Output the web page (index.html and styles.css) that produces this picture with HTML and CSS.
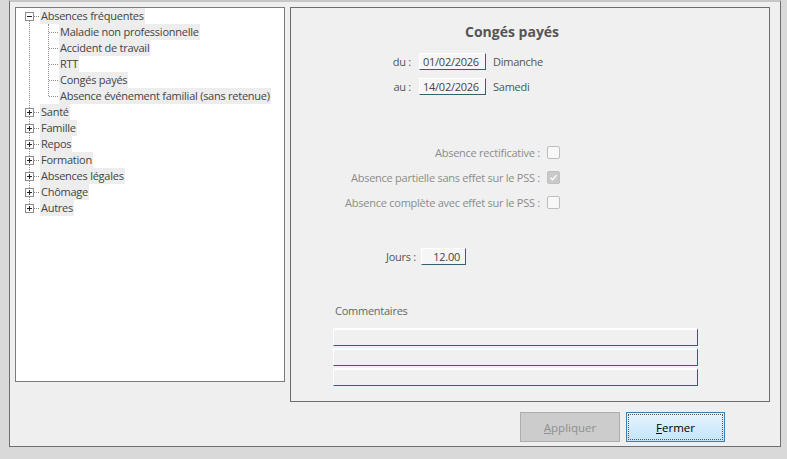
FILE: index.html
```html
<!DOCTYPE html>
<html lang="fr">
<head>
    <meta charset="UTF-8">
    <title>Absences</title>
    <link rel="stylesheet" href="styles.css">
</head>
<body>
    <div class="window">
        <div class="main">
            <!-- Arbre des motifs -->
            <div class="tree">
                <ul class="roots">
                    <li class="open">
                        <span class="exp"><svg width="9" height="9" viewBox="0 0 9 9"><rect x="0.5" y="0.5" width="8" height="8" fill="#fff" stroke="#8c8c8c"/><path d="M2 4.5h5" stroke="#222"/></svg></span>
                        <span class="label">Absences fréquentes</span>
                        <ul class="kids">
                            <li><span class="label">Maladie non professionnelle</span></li>
                            <li><span class="label">Accident de travail</span></li>
                            <li><span class="label">RTT</span></li>
                            <li><span class="label">Congés payés</span></li>
                            <li><span class="label">Absence événement familial (sans retenue)</span></li>
                        </ul>
                    </li>
                    <li><span class="exp"><svg width="9" height="9" viewBox="0 0 9 9"><rect x="0.5" y="0.5" width="8" height="8" fill="#fff" stroke="#8c8c8c"/><path d="M2 4.5h5M4.5 2v5" stroke="#222"/></svg></span><span class="label">Santé</span></li>
                    <li><span class="exp"><svg width="9" height="9" viewBox="0 0 9 9"><rect x="0.5" y="0.5" width="8" height="8" fill="#fff" stroke="#8c8c8c"/><path d="M2 4.5h5M4.5 2v5" stroke="#222"/></svg></span><span class="label">Famille</span></li>
                    <li><span class="exp"><svg width="9" height="9" viewBox="0 0 9 9"><rect x="0.5" y="0.5" width="8" height="8" fill="#fff" stroke="#8c8c8c"/><path d="M2 4.5h5M4.5 2v5" stroke="#222"/></svg></span><span class="label">Repos</span></li>
                    <li><span class="exp"><svg width="9" height="9" viewBox="0 0 9 9"><rect x="0.5" y="0.5" width="8" height="8" fill="#fff" stroke="#8c8c8c"/><path d="M2 4.5h5M4.5 2v5" stroke="#222"/></svg></span><span class="label">Formation</span></li>
                    <li><span class="exp"><svg width="9" height="9" viewBox="0 0 9 9"><rect x="0.5" y="0.5" width="8" height="8" fill="#fff" stroke="#8c8c8c"/><path d="M2 4.5h5M4.5 2v5" stroke="#222"/></svg></span><span class="label">Absences légales</span></li>
                    <li><span class="exp"><svg width="9" height="9" viewBox="0 0 9 9"><rect x="0.5" y="0.5" width="8" height="8" fill="#fff" stroke="#8c8c8c"/><path d="M2 4.5h5M4.5 2v5" stroke="#222"/></svg></span><span class="label">Chômage</span></li>
                    <li><span class="exp"><svg width="9" height="9" viewBox="0 0 9 9"><rect x="0.5" y="0.5" width="8" height="8" fill="#fff" stroke="#8c8c8c"/><path d="M2 4.5h5M4.5 2v5" stroke="#222"/></svg></span><span class="label">Autres</span></li>
                </ul>
            </div>

            <!-- Détail de l'absence -->
            <div class="frame">
                <h1 class="title">Congés payés</h1>

                <div class="row date-row first">
                    <span class="lbl">du :</span>
                    <span class="box date">01/02/2026</span>
                    <span class="day">Dimanche</span>
                </div>
                <div class="row date-row">
                    <span class="lbl">au :</span>
                    <span class="box date">14/02/2026</span>
                    <span class="day">Samedi</span>
                </div>

                <div class="row check-row first">
                    <span class="lbl">Absence rectificative :</span>
                    <span class="check"></span>
                </div>
                <div class="row check-row">
                    <span class="lbl">Absence partielle sans effet sur le PSS :</span>
                    <span class="check checked"><svg width="13" height="13" viewBox="0 0 13 13"><path d="M3.5 6.8l2 2 4-4.5" fill="none" stroke="#fff" stroke-width="1.3"/></svg></span>
                </div>
                <div class="row check-row">
                    <span class="lbl">Absence complète avec effet sur le PSS :</span>
                    <span class="check"></span>
                </div>

                <div class="row days-row">
                    <span class="lbl">Jours :</span>
                    <span class="box days">12.00</span>
                </div>

                <div class="comments">
                    <div class="comments-title">Commentaires</div>
                    <div class="line"></div>
                    <div class="line"></div>
                    <div class="line"></div>
                </div>
            </div>
        </div>

        <div class="actions">
            <button class="btn disabled"><u>A</u>ppliquer</button>
            <button class="btn primary"><u>F</u>ermer</button>
        </div>
    </div>
</body>
</html>
```

FILE: styles.css
```css
* {
    box-sizing: border-box;
    margin: 0;
    padding: 0;
}

body {
    font-family: 'Open Sans', 'Noto Sans', sans-serif;
    font-size: 11px;
    letter-spacing: -0.25px;
    background-color: #d9d9d9;
    color: #444;
}

.window {
    width: 772px;
    height: 447px;
    margin-left: 9px;
    background-color: #efefef;
    border: 1px solid #6e6e6e;
    border-top: 2px solid #c6c6c6;
    padding: 5px 0 0 5px;
}

.main {
    display: flex;
    align-items: flex-start;
    gap: 5px;
}

/* Arbre */
.tree {
    width: 270px;
    height: 375px;
    background-color: #fff;
    border: 1px solid #7b7b7b;
}

ul {
    list-style: none;
}

.roots {
    position: relative;
}

.roots::before {
    content: '';
    position: absolute;
    left: 13px;
    top: 8px;
    bottom: 8px;
    border-left: 1px dotted #8e8e8e;
}

.roots > li {
    position: relative;
    padding-left: 24px;
}

.roots > li::before,
.kids > li::before {
    content: '';
    position: absolute;
    top: 8px;
    border-top: 1px dotted #8e8e8e;
}

.roots > li::before {
    left: 18px;
    width: 5px;
}

.exp {
    position: absolute;
    left: 9px;
    top: 4px;
    width: 9px;
    height: 9px;
    z-index: 1;
}

.exp svg {
    display: block;
}

.label {
    display: inline-block;
    height: 16px;
    line-height: 16px;
    padding: 0 1px;
    background-color: #ededed;
    color: #444;
    white-space: nowrap;
    vertical-align: top;
}

.kids {
    position: relative;
    padding-left: 19px;
}

.kids::before {
    content: '';
    position: absolute;
    left: 8px;
    top: 0;
    bottom: 8px;
    border-left: 1px dotted #8e8e8e;
}

.kids > li {
    position: relative;
    height: 16px;
}

.kids > li::before {
    left: -10px;
    width: 9px;
}

/* Cadre de détail */
.frame {
    width: 480px;
    height: 395px;
    border: 1px solid #6d6d6d;
    background-color: #f0f0f0;
}

.title {
    margin-top: 15px;
    padding-left: 174px;
    font-size: 14px;
    line-height: 18px;
    font-weight: bold;
    letter-spacing: 0;
    color: #555;
}

.row {
    display: flex;
    align-items: center;
    color: #555;
}

.lbl {
    text-align: right;
    white-space: nowrap;
}

.date-row {
    height: 17px;
    margin-top: 8px;
}

.date-row.first {
    margin-top: 12px;
}

.date-row .lbl {
    width: 120px;
}

.box {
    height: 17px;
    line-height: 16px;
    background-color: #f6f6f6;
    border-top: 1px solid #fff;
    border-left: 1px solid #fff;
    border-right: 1px solid #35606f;
    border-bottom: 1px solid #35606f;
    color: #444;
}

.date {
    width: 67px;
    margin-left: 8px;
    padding-left: 3px;
}

.day {
    margin-left: 7px;
}

.check-row {
    height: 13px;
    margin-top: 12px;
    color: #8c8c8c;
}

.check-row.first {
    margin-top: 51px;
}

.check-row .lbl {
    width: 249px;
}

.check {
    width: 13px;
    height: 13px;
    margin-left: 7px;
    border: 1px solid #bdbdbd;
    border-radius: 2px;
    background-color: #f8f8f8;
}

.check.checked {
    background-color: #c9c9c9;
    border-color: #c0c0c0;
}

.check svg {
    display: block;
    margin: -1px;
}

.days-row {
    height: 17px;
    margin-top: 39px;
}

.days-row .lbl {
    width: 125px;
}

.days {
    width: 45px;
    margin-left: 5px;
    padding-right: 5px;
    text-align: right;
}

.comments {
    margin-top: 38px;
    padding-left: 42px;
}

.comments-title {
    height: 16px;
    line-height: 16px;
    padding-left: 2px;
    color: #666;
    margin-bottom: 9px;
}

.line {
    width: 365px;
    height: 18px;
    margin-bottom: 2px;
    border-top: 2px solid #fff;
    border-left: 1px solid #fff;
    border-right: 1px solid #33606e;
    border-bottom: 1px solid #33606e;
}

/* Boutons */
.actions {
    display: flex;
    justify-content: flex-end;
    gap: 6px;
    margin-top: 10px;
    padding-right: 55px;
}

.btn {
    width: 100px;
    height: 30px;
    font-family: inherit;
    font-size: 11.5px;
    letter-spacing: 0;
    border: 1px solid #adadad;
}

.btn.disabled {
    background-color: #cccccc;
    color: #8f8f8f;
}

.btn.primary {
    width: 99px;
    background: linear-gradient(#e8f4fc, #c2e4fa);
    border-color: #3c7fb1;
    color: #000;
    outline: 1px dotted #555;
    outline-offset: -3px;
}
```
